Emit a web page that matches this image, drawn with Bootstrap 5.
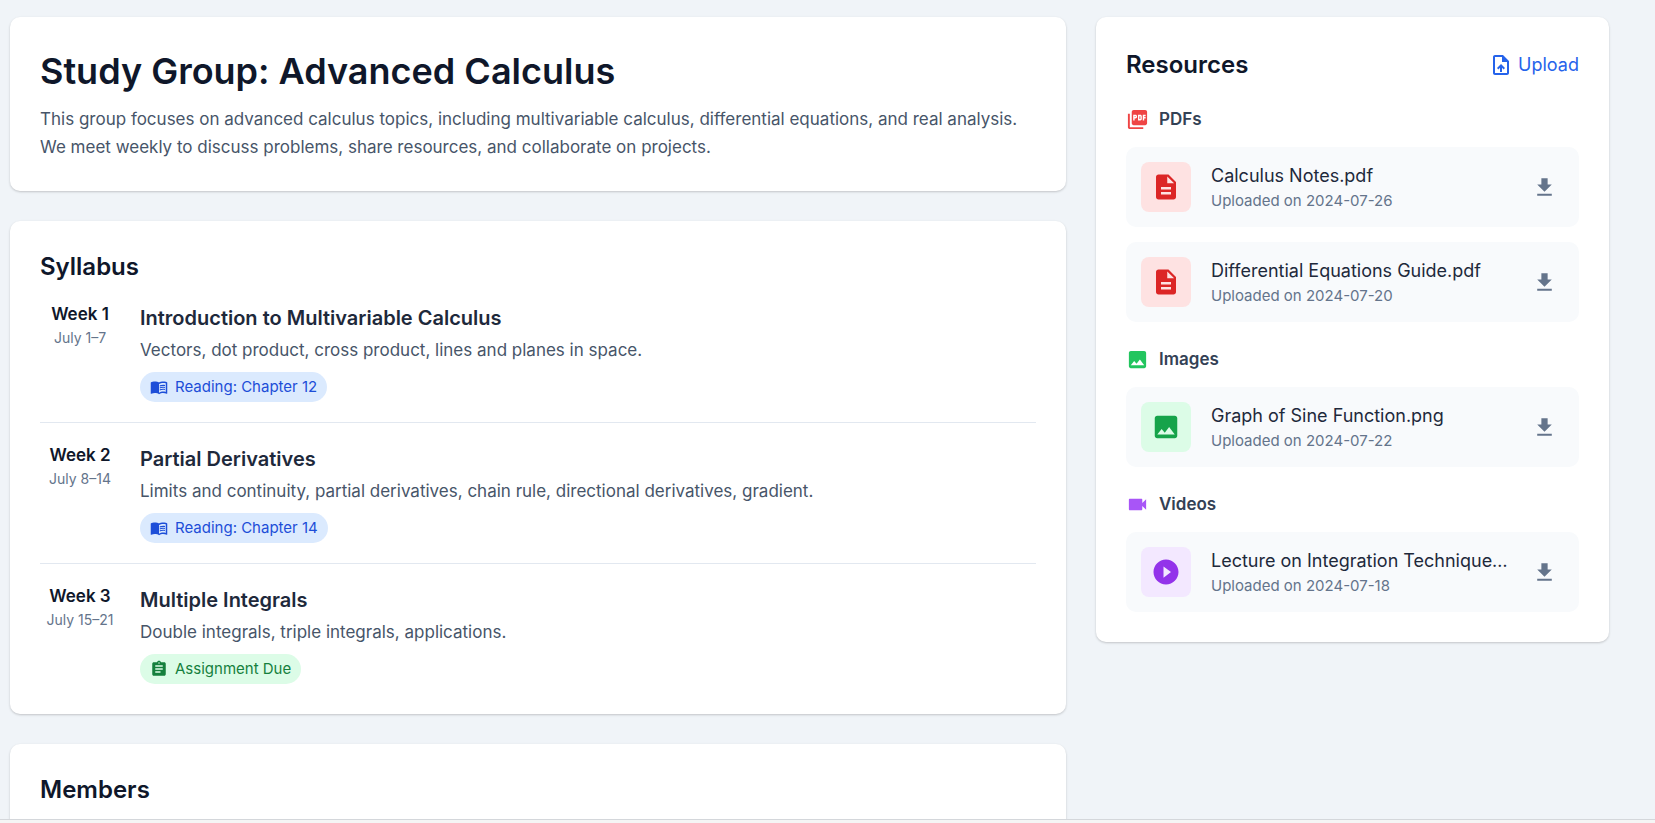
<!DOCTYPE html>
<html lang="en">
<head>
<meta charset="utf-8">
<meta name="viewport" content="width=device-width, initial-scale=1">
<title>Study Group: Advanced Calculus</title>
<link href="https://cdn.jsdelivr.net/npm/bootstrap@5.3.0/dist/css/bootstrap.min.css" rel="stylesheet">
<style>
  body { background: #f0f4f8; color: #0f172a; font-family: Inter, "Open Sans", sans-serif; font-size: 17px; line-height: 28px; }
  svg { fill: currentColor; flex: none; display: block; }
  .app-foot { height: 4px; background: #f5f5f5; border-top: 1px solid #d4d7db; }
  .app-main { min-height: 0; padding: 17px 46px 0 10px; }
  .board { --bs-gutter-x: 30px; }
  .stack { gap: 30px; }
  .panel { background: #fff; border-radius: 10px; padding: 30px; box-shadow: 0 1px 3px rgba(0,0,0,.1), 0 1px 2px rgba(0,0,0,.1); }
  h1 { font-size: 36px; line-height: 48px; font-weight: 600; margin-bottom: 10px; }
  h2 { font-size: 24px; line-height: 31px; font-weight: 600; margin: 0; }
  h3 { font-size: 20px; line-height: 32px; font-weight: 600; margin: 0; }
  .soft { color: #475569; }
  .muted { color: #64748b; font-size: 15px; line-height: 22px; }
  .week { padding: 20px 0; gap: 20px; border-bottom: 1px solid #e2e8f0; }
  .week:last-child { padding-bottom: 0; border-bottom: 0; }
  .week h3 { color: #1e293b; margin-bottom: 2px; }
  .week-when { width: 80px; flex: none; }
  .week-when .muted { font-size: 14px; }
  .week-no { font-weight: 600; line-height: 25px; }
  .tag { height: 30px; padding: 0 10px; gap: 7px; font-size: 15px; }
  .tag-read { background: #dbeafe; color: #1d4ed8; }
  .tag-due { background: #dcfce7; color: #15803d; }
  .res-head { height: 35px; margin-bottom: 25px; }
  .upload { color: #2563eb; gap: 5px; font-size: 18px; }
  .group-head { font-size: 17px; line-height: 25px; gap: 10px; margin-bottom: 15px; color: #334155; }
  .group + .group { margin-top: 25px; }
  .group ul { gap: 15px; }
  .file { background: #f8fafc; border-radius: 10px; padding: 15px; gap: 20px; }
  .thumb { width: 50px; height: 50px; border-radius: 8px; flex: none; }
  .file-name { color: #1e293b; font-size: 18px; line-height: 28px; }
  .get { color: #64748b; padding: 7px 7px 7px 0; border: 0; background: none; }
  .c-red { color: #ef4444; } .c-green { color: #22c55e; } .c-purple { color: #a855f7; }
  .t-red { background: #fee2e2; color: #dc2626; }
  .t-green { background: #dcfce7; color: #16a34a; }
  .t-purple { background: #f3e8ff; color: #9333ea; }
</style>
</head>
<body>
<svg class="d-none" aria-hidden="true">
  <symbol id="i-book" viewBox="0 0 24 24"><path d="M21 5c-1.11-.35-2.33-.5-3.5-.5-1.95 0-4.05.4-5.5 1.5-1.45-1.1-3.55-1.5-5.5-1.5S2.45 4.9 1 6v14.65c0 .25.25.5.5.5.1 0 .15-.05.25-.05C3.1 20.45 5.05 20 6.5 20c1.95 0 4.05.4 5.5 1.5 1.35-.85 3.8-1.5 5.5-1.5 1.65 0 3.35.3 4.75 1.05.1.05.15.05.25.05.25 0 .5-.25.5-.5V6c-.6-.45-1.25-.75-2-1zm0 13.500c-1.100-.350-2.300-.500-3.500-.500-1.700 0-4.150.650-5.500 1.500V8c1.350-.850 3.800-1.500 5.500-1.500 1.200 0 2.400.150 3.500.500z"/><path d="M17.500 10.500c.880 0 1.730.090 2.500.260V9.240c-.790-.150-1.640-.240-2.500-.240-1.700 0-3.240.290-4.500.830v1.660c1.130-.640 2.700-.990 4.500-.990zM13 12.490v1.660c1.130-.640 2.700-.990 4.500-.990.880 0 1.730.090 2.500.260V11.900c-.790-.150-1.640-.240-2.500-.240-1.700 0-3.240.300-4.500.830zm4.500 1.840c-1.700 0-3.240.290-4.500.830v1.660c1.130-.640 2.700-.990 4.500-.990.880 0 1.730.090 2.500.260v-1.520c-.790-.160-1.640-.240-2.500-.240z"/></symbol>
  <symbol id="i-task" viewBox="0 0 24 24"><path d="M19 3h-4.180C14.400 1.840 13.300 1 12 1s-2.400.840-2.820 2H5c-1.100 0-2 .900-2 2v14c0 1.100.900 2 2 2h14c1.100 0 2-.900 2-2V5c0-1.100-.900-2-2-2zm-7 0c.550 0 1 .450 1 1s-.450 1-1 1-1-.450-1-1 .450-1 1-1zm2 14H7v-2h7v2zm3-4H7v-2h10v2zm0-4H7V7h10v2z"/></symbol>
  <symbol id="i-upload" viewBox="0 0 24 24"><path d="M14 2H6c-1.100 0-1.990.900-1.990 2L4 20c0 1.100.890 2 1.990 2H18c1.100 0 2-.900 2-2V8l-6-6zm4 18H6V4h7v5h5v11zM8 15.010l1.410 1.410L11 14.840V19h2v-4.160l1.590 1.590L16 15.010 12.010 11 8 15.010z"/></symbol>
  <symbol id="i-pdf" viewBox="0 0 24 24"><path d="M20 2H8c-1.100 0-2 .900-2 2v12c0 1.100.900 2 2 2h12c1.100 0 2-.900 2-2V4c0-1.100-.900-2-2-2zm-8.500 7.500c0 .830-.670 1.500-1.500 1.500H9v2H7.500V7H10c.830 0 1.500.670 1.500 1.500v1zm5 2c0 .830-.670 1.500-1.500 1.500h-2.500V7H15c.830 0 1.500.670 1.500 1.500v3zm4-3H19v1h1.500V11H19v2h-1.500V7h3v1.500zM9 9.500h1v-1H9v1zM4 6H2v14c0 1.100.900 2 2 2h14v-2H4V6zm10 5.500h1v-3h-1v3z"/></symbol>
  <symbol id="i-doc" viewBox="0 0 24 24"><path d="M14 2H6c-1.100 0-1.990.900-1.990 2L4 20c0 1.100.890 2 1.990 2H18c1.100 0 2-.900 2-2V8l-6-6zm2 16H8v-2h8v2zm0-4H8v-2h8v2zm-3-5V3.500L18.500 9H13z"/></symbol>
  <symbol id="i-image" viewBox="0 0 24 24"><path d="M21 19V5c0-1.100-.900-2-2-2H5c-1.100 0-2 .900-2 2v14c0 1.100.900 2 2 2h14c1.100 0 2-.900 2-2zM8.500 13.500l2.500 3.010L14.500 12l4.500 6H5l3.500-4.500z"/></symbol>
  <symbol id="i-video" viewBox="0 0 24 24"><path d="M17 10.500V7c0-.550-.450-1-1-1H4c-.550 0-1 .450-1 1v10c0 .550.450 1 1 1h12c.550 0 1-.450 1-1v-3.500l4 4v-11l-4 4z"/></symbol>
  <symbol id="i-play" viewBox="0 0 24 24"><path d="M12 2C6.480 2 2 6.480 2 12s4.480 10 10 10 10-4.480 10-10S17.520 2 12 2zm-2 14.500v-9l6 4.500-6 4.500z"/></symbol>
  <symbol id="i-down" viewBox="0 0 24 24"><path d="M19 9h-4V3H9v6H5l7 7 7-7zM5 18v2h14v-2H5z"/></symbol>
</svg>

<div class="vh-100 d-flex flex-column">
  <main class="app-main flex-grow-1 overflow-hidden">
    <div class="row board">
      <div class="col-8">
        <div class="stack d-flex flex-column">
          <section class="panel">
            <h1>Study Group: Advanced Calculus</h1>
            <p class="soft mb-0">This group focuses on advanced calculus topics, including multivariable calculus, differential equations, and real analysis. We meet weekly to discuss problems, share resources, and collaborate on projects.</p>
          </section>

          <section class="panel">
            <h2>Syllabus</h2>
            <div>
              <article class="week d-flex">
                <div class="week-when text-center">
                  <div class="week-no">Week 1</div>
                  <div class="muted">July 1–7</div>
                </div>
                <div class="d-flex flex-column align-items-start">
                  <h3>Introduction to Multivariable Calculus</h3>
                  <p class="soft mb-2">Vectors, dot product, cross product, lines and planes in space.</p>
                  <span class="tag tag-read rounded-pill d-flex align-items-center"><svg width="18" height="18"><use href="#i-book"/></svg>Reading: Chapter 12</span>
                </div>
              </article>
              <article class="week d-flex">
                <div class="week-when text-center">
                  <div class="week-no">Week 2</div>
                  <div class="muted">July 8–14</div>
                </div>
                <div class="d-flex flex-column align-items-start">
                  <h3>Partial Derivatives</h3>
                  <p class="soft mb-2">Limits and continuity, partial derivatives, chain rule, directional derivatives, gradient.</p>
                  <span class="tag tag-read rounded-pill d-flex align-items-center"><svg width="18" height="18"><use href="#i-book"/></svg>Reading: Chapter 14</span>
                </div>
              </article>
              <article class="week d-flex">
                <div class="week-when text-center">
                  <div class="week-no">Week 3</div>
                  <div class="muted">July 15–21</div>
                </div>
                <div class="d-flex flex-column align-items-start">
                  <h3>Multiple Integrals</h3>
                  <p class="soft mb-2">Double integrals, triple integrals, applications.</p>
                  <span class="tag tag-due rounded-pill d-flex align-items-center"><svg width="18" height="18"><use href="#i-task"/></svg>Assignment Due</span>
                </div>
              </article>
            </div>
          </section>

          <section class="panel">
            <h2>Members</h2>
          </section>
        </div>
      </div>

      <div class="col-4">
        <aside class="panel">
          <div class="res-head d-flex align-items-center justify-content-between">
            <h2>Resources</h2>
            <a class="upload d-flex align-items-center text-decoration-none" href="#"><svg width="24" height="24"><use href="#i-upload"/></svg>Upload</a>
          </div>
          <div class="group">
            <h3 class="group-head d-flex align-items-center"><svg class="c-red" width="23" height="23"><use href="#i-pdf"/></svg>PDFs</h3>
            <ul class="list-unstyled d-flex flex-column mb-0">
              <li class="file d-flex align-items-center">
                <div class="thumb t-red d-flex align-items-center justify-content-center"><svg width="30" height="30"><use href="#i-doc"/></svg></div>
                <div class="flex-grow-1 overflow-hidden">
                  <div class="file-name text-truncate">Calculus Notes.pdf</div>
                  <div class="muted">Uploaded on 2024-07-26</div>
                </div>
                <button class="get" type="button" aria-label="Download Calculus Notes.pdf"><svg width="25" height="25"><use href="#i-down"/></svg></button>
              </li>
              <li class="file d-flex align-items-center">
                <div class="thumb t-red d-flex align-items-center justify-content-center"><svg width="30" height="30"><use href="#i-doc"/></svg></div>
                <div class="flex-grow-1 overflow-hidden">
                  <div class="file-name text-truncate">Differential Equations Guide.pdf</div>
                  <div class="muted">Uploaded on 2024-07-20</div>
                </div>
                <button class="get" type="button" aria-label="Download Differential Equations Guide.pdf"><svg width="25" height="25"><use href="#i-down"/></svg></button>
              </li>
            </ul>
          </div>
          <div class="group">
            <h3 class="group-head d-flex align-items-center"><svg class="c-green" width="23" height="23"><use href="#i-image"/></svg>Images</h3>
            <ul class="list-unstyled d-flex flex-column mb-0">
              <li class="file d-flex align-items-center">
                <div class="thumb t-green d-flex align-items-center justify-content-center"><svg width="30" height="30"><use href="#i-image"/></svg></div>
                <div class="flex-grow-1 overflow-hidden">
                  <div class="file-name text-truncate">Graph of Sine Function.png</div>
                  <div class="muted">Uploaded on 2024-07-22</div>
                </div>
                <button class="get" type="button" aria-label="Download Graph of Sine Function.png"><svg width="25" height="25"><use href="#i-down"/></svg></button>
              </li>
            </ul>
          </div>
          <div class="group">
            <h3 class="group-head d-flex align-items-center"><svg class="c-purple" width="23" height="23"><use href="#i-video"/></svg>Videos</h3>
            <ul class="list-unstyled d-flex flex-column mb-0">
              <li class="file d-flex align-items-center">
                <div class="thumb t-purple d-flex align-items-center justify-content-center"><svg width="30" height="30"><use href="#i-play"/></svg></div>
                <div class="flex-grow-1 overflow-hidden">
                  <div class="file-name text-truncate">Lecture on Integration Technique…</div>
                  <div class="muted">Uploaded on 2024-07-18</div>
                </div>
                <button class="get" type="button" aria-label="Download Lecture on Integration Techniques"><svg width="25" height="25"><use href="#i-down"/></svg></button>
              </li>
            </ul>
          </div>
        </aside>
      </div>
    </div>
  </main>
  <footer class="app-foot"></footer>
</div>
<script src="https://cdn.jsdelivr.net/npm/bootstrap@5.3.0/dist/js/bootstrap.bundle.min.js"></script>
</body>
</html>
